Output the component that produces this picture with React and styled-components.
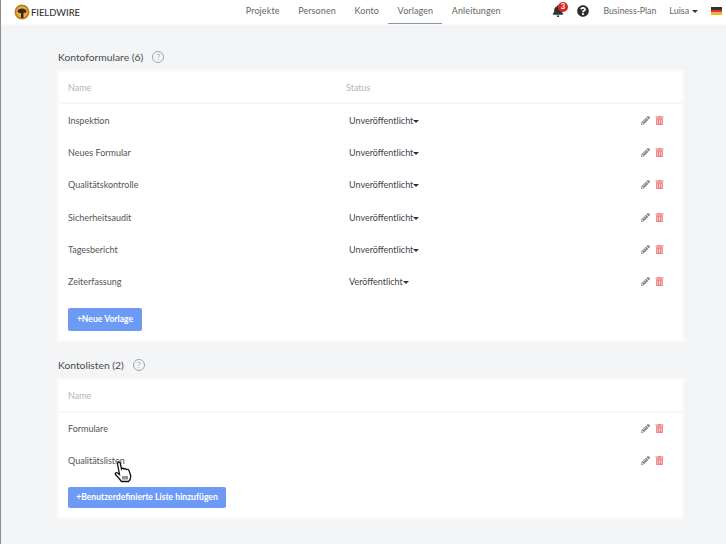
import styled, { createGlobalStyle } from "styled-components";
import { FaBell, FaQuestionCircle, FaPencilAlt, FaTrashAlt } from "react-icons/fa";

const GlobalStyle = createGlobalStyle`
  html, body {
    margin: 0;
    padding: 0;
    background: #f4f5f7;
  }
  * {
    box-sizing: border-box;
  }
`;

const Page = styled.div`
  position: relative;
  width: 726px;
  height: 544px;
  overflow: hidden;
  background: #f4f5f7;
  border-left: 1px solid #8d8d8d;
  font-family: Lato, "Liberation Sans", sans-serif;
  color: #555;
  font-size: 9px;
`;

const Header = styled.header`
  height: 24px;
  background: #fff;
  display: flex;
  align-items: stretch;
  padding-left: 13px;
  box-shadow: 0 1px 0 #fafafa;
  white-space: nowrap;
`;

const Brand = styled.div`
  display: flex;
  align-items: center;
  gap: 1px;
  width: 222.5px;
  font-size: 9.4px;
  font-weight: 500;
  color: #333;
`;

const Nav = styled.nav`
  display: flex;
  align-items: stretch;
`;

const NavItem = styled.a`
  display: flex;
  align-items: center;
  justify-content: center;
  padding: 0 9.3px 3px;
  color: #666;
  letter-spacing: 0.1px;
  border-bottom: 1px solid ${(p) => (p.$active ? "#8b95ad" : "transparent")};
`;

const Tools = styled.div`
  display: flex;
  align-items: center;
  padding-bottom: 3px;
  color: #666;
`;

const BellWrap = styled.span`
  position: relative;
  display: flex;
  margin-left: 42px;
  margin-right: 13px;
  color: #333;
`;

const Badge = styled.span`
  position: absolute;
  top: -3px;
  left: 6px;
  width: 10px;
  height: 10px;
  border-radius: 50%;
  background: #e02424;
  color: #fff;
  font-size: 7.5px;
  font-weight: 700;
  line-height: 10px;
  text-align: center;
`;

const HelpDark = styled.span`
  display: flex;
  color: #2e2e2e;
  margin-right: 14.5px;
`;

const Plan = styled.span`
  margin-right: 13px;
  font-size: 8.7px;
`;

const Caret = styled.span`
  display: inline-block;
  width: 0;
  height: 0;
  margin-left: ${(p) => p.$gap || 0}px;
  border-left: 3px solid transparent;
  border-right: 3px solid transparent;
  border-top: 3px solid #333;
  vertical-align: middle;
`;

const User = styled.span`
  margin-right: 13px;
`;

const Flag = styled.span`
  width: 11px;
  height: 8px;
  background: linear-gradient(#333 33%, #d33 33%, #d33 66%, #e8b92e 66%);
`;

const Main = styled.main`
  padding: 26px 42px 0 56px;
`;

const SectionTitle = styled.div`
  display: flex;
  align-items: center;
  height: 14px;
  gap: 9px;
  padding-left: 1px;
  font-size: 10.3px;
  color: #4a4a4a;
  margin-bottom: 6px;
`;

const HelpOutline = styled.span`
  width: 12px;
  height: 12px;
  border: 1px solid #a5a5a5;
  border-radius: 50%;
  color: #a5a5a5;
  font-size: 8px;
  line-height: 10px;
  text-align: center;
`;

const Card = styled.section`
  background: #fff;
  border: 2px solid #fbfbfc;
  margin-bottom: ${(p) => p.$mb || 0}px;
  padding-bottom: 9px;
`;

const HeadRow = styled.div`
  display: flex;
  align-items: center;
  height: ${(p) => p.$h || 32}px;
  padding-left: 9px;
  border-bottom: 2px solid #f5f6f8;
  color: #b5b5b5;
`;

const NameCol = styled.div`
  width: 278px;
`;

const Row = styled.div`
  display: flex;
  align-items: center;
  height: ${(p) => p.$h || 32.3}px;
  padding: 0 18px 0 9px;
  color: #555;
`;

const StatusCol = styled.div`
  padding-left: 3px;
  flex: 1;
  color: #444;
`;

const Actions = styled.div`
  display: flex;
  align-items: center;
  gap: 5px;
  margin-left: auto;
`;

const Edit = styled.span`
  display: flex;
  color: #8a8a8a;
`;

const Trash = styled.span`
  display: flex;
  color: #ee7f7f;
`;

const Button = styled.button`
  display: block;
  height: ${(p) => p.$h}px;
  width: ${(p) => p.$w}px;
  margin: 10px 0 0 9px;
  padding: 0;
  border: 0;
  border-radius: 2px;
  background: #6d9af5;
  color: #fff;
  font-family: inherit;
  font-size: 8.6px;
  font-weight: 700;
`;

const HandCursor = styled.svg`
  position: absolute;
  left: 113px;
  top: 461px;
`;

const forms = [
  ["Inspektion", "Unveröffentlicht"],
  ["Neues Formular", "Unveröffentlicht"],
  ["Qualitätskontrolle", "Unveröffentlicht"],
  ["Sicherheitsaudit", "Unveröffentlicht"],
  ["Tagesbericht", "Unveröffentlicht"],
  ["Zeiterfassung", "Veröffentlicht"],
];

const lists = ["Formulare", "Qualitätslisten"];

const navItems = [
  { label: "Projekte" },
  { label: "Personen" },
  { label: "Konto" },
  { label: "Vorlagen", active: true },
  { label: "Anleitungen" },
];

const RowActions = () => (
  <Actions>
    <Edit>
      <FaPencilAlt size={9} />
    </Edit>
    <Trash>
      <FaTrashAlt size={9} />
    </Trash>
  </Actions>
);

const Logo = () => (
  <svg width="16" height="16" viewBox="0 0 16 16">
    <circle cx="8" cy="8" r="7.5" fill="#b9801f" />
    <circle cx="8" cy="8" r="5.8" fill="#e5b04a" />
    <path d="M3.5 7.5C4 3.6 12 3.6 12.5 7.5L12 8.8H9.5V14H7V9.2C5 9.2 4 8.8 3.5 7.5Z" fill="#3a2c14" />
  </svg>
);

const App = () => {
  return (
    <Page>
      <GlobalStyle />
      <Header>
        <Brand>
          <Logo />
          FIELDWIRE
        </Brand>
        <Nav>
          {navItems.map((item) => (
            <NavItem key={item.label} $active={item.active}>
              {item.label}
            </NavItem>
          ))}
        </Nav>
        <Tools>
          <BellWrap>
            <FaBell size={12} />
            <Badge>3</Badge>
          </BellWrap>
          <HelpDark>
            <FaQuestionCircle size={12} />
          </HelpDark>
          <Plan>Business-Plan</Plan>
          <User>
            Luisa
            <Caret $gap={3} />
          </User>
          <Flag />
        </Tools>
      </Header>
      <Main>
        <SectionTitle>
          Kontoformulare (6)
          <HelpOutline>?</HelpOutline>
        </SectionTitle>
        <Card $mb={16}>
          <HeadRow>
            <NameCol>Name</NameCol>
            Status
          </HeadRow>
          {forms.map(([name, status]) => (
            <Row key={name}>
              <NameCol>{name}</NameCol>
              <StatusCol>
                {status}
                <Caret />
              </StatusCol>
              <RowActions />
            </Row>
          ))}
          <Button $w={74} $h={23}>
            +Neue Vorlage
          </Button>
        </Card>
        <SectionTitle>
          Kontolisten (2)
          <HelpOutline>?</HelpOutline>
        </SectionTitle>
        <Card>
          <HeadRow $h={33}>
            <NameCol>Name</NameCol>
          </HeadRow>
          {lists.map((name) => (
            <Row key={name} $h={32}>
              <NameCol>{name}</NameCol>
              <RowActions />
            </Row>
          ))}
          <Button $w={158} $h={21}>
            +Benutzerdefinierte Liste hinzufügen
          </Button>
        </Card>
      </Main>
      <HandCursor width="18" height="22" viewBox="0 0 18 22">
        <path
          d="M4 1.5C4.8.7 6 1 6.2 2L7.5 8C8 7 9.5 7 10 8C10.6 7.3 12 7.5 12.3 8.6C13 8 14.6 8.4 15 9.6L16.5 14C17 16 16 19 14.5 20.5L7.5 20.5C6 18.5 4.5 16.5 1.5 13.5C.8 12.5 2 11 3.5 12L5.5 13.5L3.5 3C3.4 2.4 3.6 1.9 4 1.5Z"
          fill="#fff"
          stroke="#111"
          strokeWidth="1.3"
        />
        <path d="M9 15V18.5M11 15V18.5M13 15V18.5" stroke="#111" strokeWidth="0.9" />
      </HandCursor>
    </Page>
  );
};

export default App;
